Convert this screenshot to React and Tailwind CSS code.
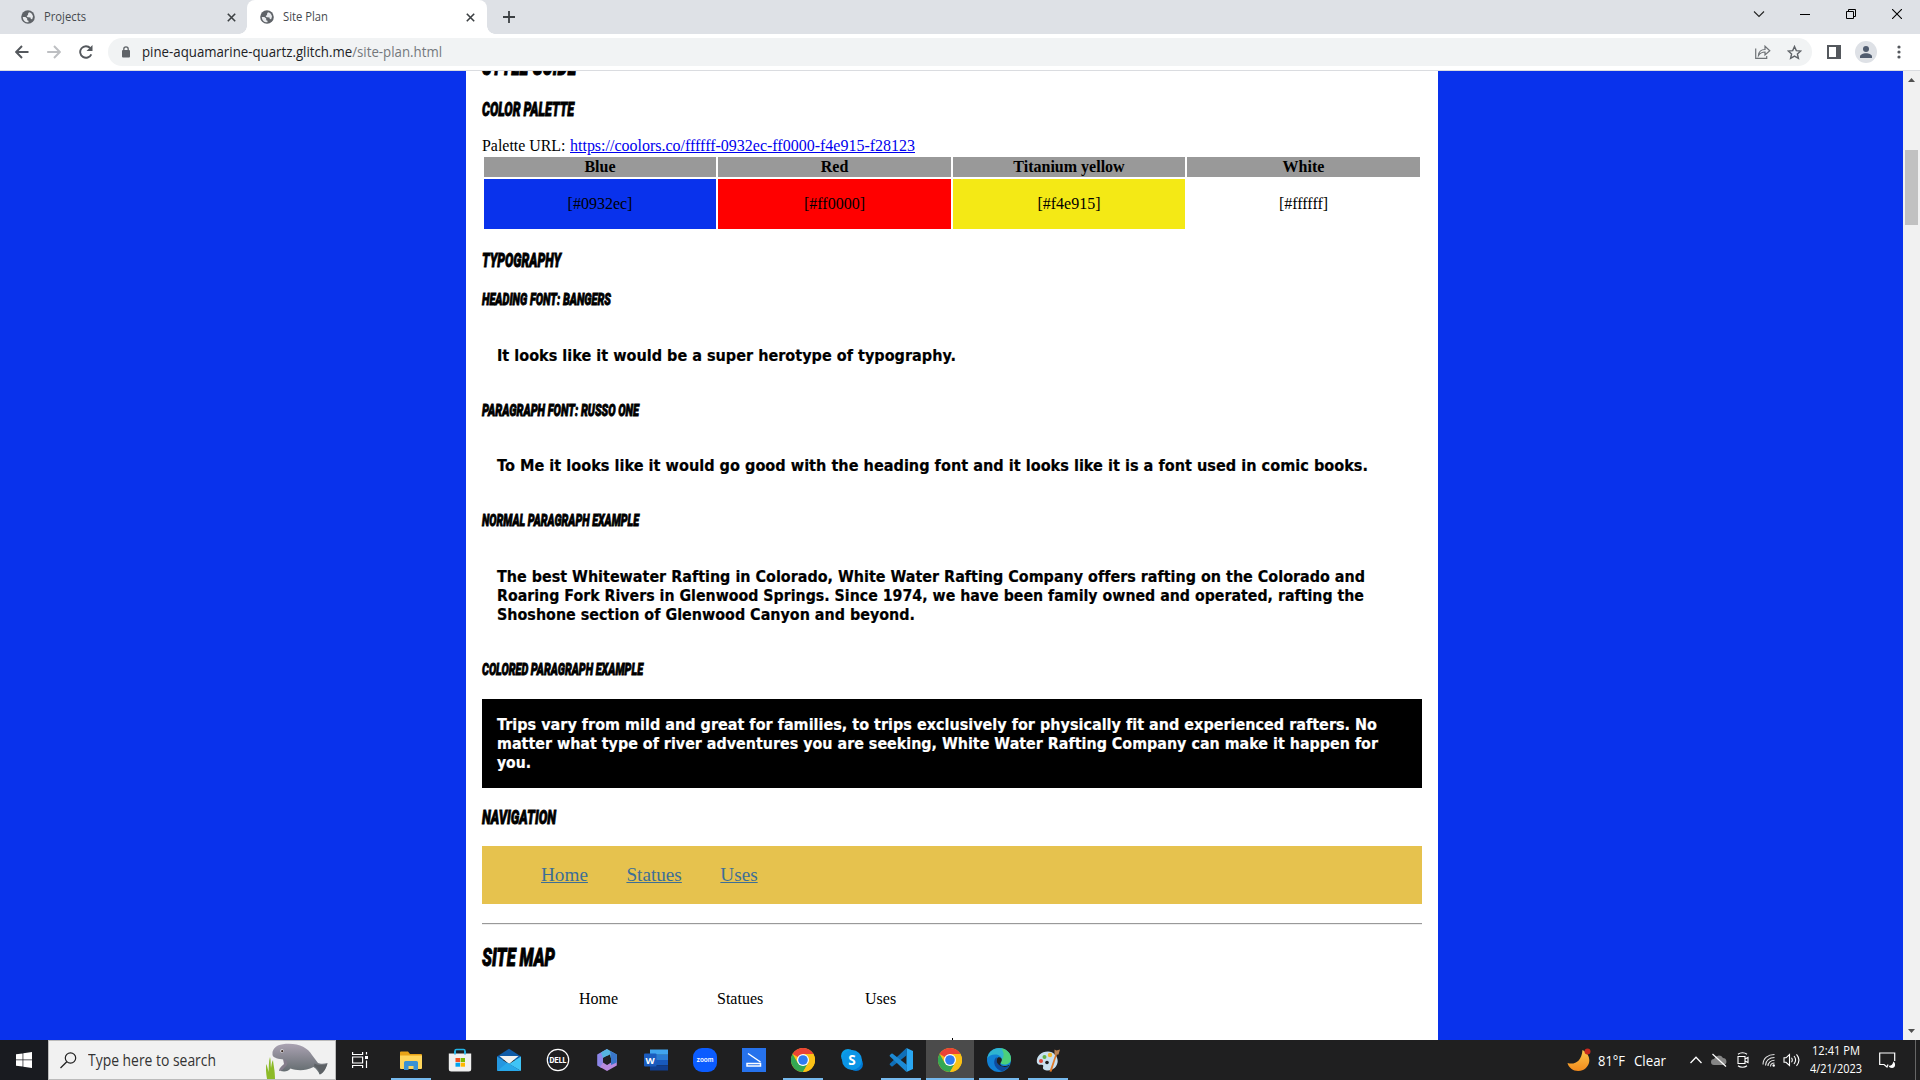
import React, { useLayoutEffect, useRef, useState } from "react";

const SEGOE = "font-['Open_Sans',sans-serif]";
const RUSSO = "font-['DejaVu_Sans',sans-serif] font-bold text-[15px] leading-[19px] [font-variant-ligatures:none] [-webkit-text-stroke:0.2px_currentColor]";
const BANGERS = "font-['Roboto',sans-serif] font-black italic [-webkit-text-stroke:0.9px_black] uppercase";

// Scales a run of text horizontally so that it fills exactly w pixels.
function Fit({ w, className = "", children }) {
  const ref = useRef(null);
  const [scale, setScale] = useState(1);
  useLayoutEffect(() => {
    ref.current.style.transform = "none";
    const s = w / ref.current.getBoundingClientRect().width;
    ref.current.style.transform = `scaleX(${s})`;
    setScale(s);
  }, [w]);
  return (
    <span className="block shrink-0 whitespace-nowrap" style={{ width: w }}>
      <span ref={ref} className={"inline-block origin-left align-top " + className} style={{ transform: `scaleX(${scale})` }}>
        {children}
      </span>
    </span>
  );
}

const H2 = ({ w, mt, children }) => (
  <h2 className={`${BANGERS} h-7 text-[25px] leading-7 ${mt}`}><Fit w={w}>{children}</Fit></h2>
);
const H3 = ({ w, mt, children }) => (
  <h3 className={`${BANGERS} h-6 text-[20px] leading-6 ${mt}`}><Fit w={w}>{children}</Fit></h3>
);
const H4 = ({ w, mt, children }) => (
  <h4 className={`${BANGERS} h-5 text-[17px] leading-5 ${mt}`}><Fit w={w}>{children}</Fit></h4>
);
const Para = ({ lines, className }) => (
  <div className={`px-[15px] pt-[17px] pb-[15px] ${RUSSO} ${className}`}>
    {lines.map(([t, w]) => (
      <Fit key={t} w={w}>{t}</Fit>
    ))}
  </div>
);

const Globe = () => (
  <svg className="size-[14px] shrink-0" viewBox="0 0 14 14">
    <circle cx="7" cy="7" r="6.8" fill="#5f6368" />
    <path d="M1.800 7h2.600l1.800 1.600v1.600l1.300.6v1.500C4 12.500 1.800 10 1.800 7zM7.300 2c2.600.2 4.500 2.200 4.700 4.600l-.8 2.600-1.400-.3-.3-1.500-2.600-.2c-1.700-.2-1.300-1.700 0-1.900l.2-1.200c0-.9.3-1.200 1.300-1.300z" fill="#e8eaed" />
  </svg>
);
const Close = () => (
  <svg className="size-[9px] shrink-0" viewBox="0 0 9 9"><path d="M.8.8l7.400 7.400M8.200.8.8 8.200" stroke="#3c4043" strokeWidth="1.600" /></svg>
);

function TabStrip() {
  return (
    <div className={`flex h-[34px] bg-[#dee1e6] ${SEGOE} text-[12px] leading-4 text-[#45494d]`}>
      <div className="flex w-[247px] items-center pl-[21px]">
        <Globe />
        <div className="ml-[9px] w-[183px]"><Fit w={42}>Projects</Fit></div>
        <Close />
      </div>
      <div className="flex">
        <div className="relative flex w-[240px] items-center rounded-t-lg bg-white pl-[13px]">
          <span className="absolute -left-2 bottom-0 size-2 bg-[radial-gradient(circle_at_0_0,#dee1e6_7.5px,white_8px)]" />
          <span className="absolute -right-2 bottom-0 size-2 bg-[radial-gradient(circle_at_100%_0,#dee1e6_7.5px,white_8px)]" />
          <Globe />
          <div className="ml-[9px] w-[183px]"><Fit w={45}>Site Plan</Fit></div>
          <Close />
        </div>
      </div>
      <svg className="mt-[11px] ml-[16px] size-3" viewBox="0 0 12 12"><path d="M6 0v12M0 6h12" stroke="#3c4043" strokeWidth="1.800" /></svg>
      <div className="ml-auto flex items-start pt-[9px] pr-[18px]">
        <svg className="mr-[35px] size-[12px]" viewBox="0 0 12 12"><path d="M1 2.500 6 7.500 11 2.500" fill="none" stroke="#222" strokeWidth="1.100" /></svg>
        <svg className="mr-[36px] h-[12px] w-[10px]" viewBox="0 0 10 12"><path d="M0 5.500h10" stroke="#000" /></svg>
        <svg className="mr-[36px] size-[10px]" viewBox="0 0 10 10"><path d="M.5 2.500h7v7h-7zM2.500 2.500v-2h7v7h-2" fill="none" stroke="#000" /></svg>
        <svg className="size-[10px]" viewBox="0 0 10 10"><path d="M0 0l10 10M10 0 0 10" stroke="#000" strokeWidth="1.100" /></svg>
      </div>
    </div>
  );
}

function Toolbar() {
  return (
    <div className={`flex h-9 items-center bg-white ${SEGOE}`}>
      <svg className="ml-[15px] size-[14px] shrink-0" viewBox="0 0 14 14"><path d="M13.500 7H1.500M7 1 1.200 7 7 13" fill="none" stroke="#54585d" strokeWidth="1.900" /></svg>
      <svg className="ml-[18px] size-[14px] shrink-0" viewBox="0 0 14 14"><path d="M.2 7h12M7 1l5.800 6L7 13" fill="none" stroke="#bdbfc2" strokeWidth="1.900" /></svg>
      <svg className="ml-[18px] size-[14px] shrink-0" viewBox="0 0 14 14"><path d="M12.300 9.300A5.800 5.800 0 1 1 11.300 3.100" fill="none" stroke="#54585d" strokeWidth="1.900" /><path d="M13.500 0v6H7.500z" fill="#54585d" /></svg>
      <div className="ml-[15px] flex h-7 w-[1704px] shrink-0 items-center rounded-full bg-[#f1f3f4] pl-[14px]">
        <svg className="h-[12px] w-[8px]" viewBox="0 0 8 12"><rect y="4" width="8" height="7.500" rx="1" fill="#5f6368" /><path d="M1.800 5V3a2.200 2.200 0 0 1 4.400 0v2" fill="none" stroke="#5f6368" strokeWidth="1.300" /></svg>
        <div className="ml-[12px] text-[14px] leading-5 text-[#202124]">
          <Fit w={300}>pine-aquamarine-quartz.glitch.me<span className="text-[#74787c]">/site-plan.html</span></Fit>
        </div>
        <svg className="ml-auto h-[14px] w-4" viewBox="0 0 16 14"><path d="M.7 3.500v9.800h11V11M3.500 10.500C3.800 6.500 6 4.500 10 4.500V1.200l4.800 4.600L10 10V7C7 7 5.300 7.800 3.500 10.500z" fill="none" stroke="#6f7377" strokeWidth="1.200" /></svg>
        <svg className="mr-[10px] ml-[16px] size-[15px]" viewBox="0 0 15 15"><path d="M7.500 1.500l1.800 4.100 4.500.4-3.400 3 1 4.400-3.900-2.300-3.900 2.300 1-4.400-3.400-3 4.500-.4z" fill="none" stroke="#5f6368" strokeWidth="1.400" /></svg>
      </div>
      <svg className="ml-[15px] size-[14px]" viewBox="0 0 14 14"><path fillRule="evenodd" d="M0 0h14v14H0zM2 2v10h7V2z" fill="#54585d" /></svg>
      <svg className="ml-[14px] size-[22px]" viewBox="0 0 22 22"><circle cx="11" cy="11" r="11" fill="#dee1e6" /><circle cx="11" cy="8" r="3" fill="#4f5b6e" /><path d="M5 17v-1.500c0-2 3-3.300 6-3.300s6 1.300 6 3.300V17z" fill="#4f5b6e" /></svg>
      <svg className="ml-5 h-[14px] w-[4px]" viewBox="0 0 4 14"><g fill="#54585d"><circle cx="2" cy="2" r="1.600" /><circle cx="2" cy="7" r="1.600" /><circle cx="2" cy="12" r="1.600" /></g></svg>
    </div>
  );
}

const PALETTE = [
  ["Blue", "[#0932ec]", "bg-[#0932ec]"],
  ["Red", "[#ff0000]", "bg-[#ff0000]"],
  ["Titanium yellow", "[#f4e915]", "bg-[#f4e915]"],
  ["White", "[#ffffff]", "bg-white"],
];

function SitePlan() {
  return (
    <main className="ml-[466px] flex w-[972px] flex-col bg-white px-4 font-['Liberation_Serif',serif] text-base leading-[18px] text-black">
      <H2 w={94} mt="-mt-[18px]">Style Guide</H2>
      <H3 w={92} mt="mt-4">Color Palette</H3>
      <div className="mt-4 flex h-[18px] gap-[4px]">
        <Fit w={83.5}>Palette URL:</Fit>
        <Fit w={345} className="text-[#0000ee] underline">https://coolors.co/ffffff-0932ec-ff0000-f4e915-f28123</Fit>
      </div>
      <div className="grid grid-cols-[232px_233px_232px_233px] gap-[2px] p-[2px] text-center">
        {PALETTE.map(([n]) => <div key={n} className="h-5 bg-[#999] font-bold leading-5">{n}</div>)}
        {PALETTE.map(([n, hex, bg]) => <div key={n} className={`h-[50px] leading-[50px] ${bg}`}>{hex}</div>)}
      </div>
      <H3 w={79} mt="mt-[17px]">Typography</H3>
      <H4 w={129} mt="mt-[17px]">Heading Font: Bangers</H4>
      <Para className="mt-[21px]" lines={[["It looks like it would be a super herotype of typography.", 459]]} />
      <H4 w={157} mt="mt-[19px]">Paragraph Font: Russo One</H4>
      <Para className="mt-5" lines={[["To Me it looks like it would go good with the heading font and it looks like it is a font used in comic books.", 871]]} />
      <H4 w={157} mt="mt-[19px]">Normal Paragraph Example</H4>
      <Para
        className="mt-[21px]"
        lines={[
          ["The best Whitewater Rafting in Colorado, White Water Rafting Company offers rafting on the Colorado and", 868],
          ["Roaring Fork Rivers in Glenwood Springs. Since 1974, we have been family owned and operated, rafting the", 867],
          ["Shoshone section of Glenwood Canyon and beyond.", 418],
        ]}
      />
      <H4 w={161} mt="mt-[19px]">Colored Paragraph Example</H4>
      <Para
        className="mt-5 bg-black text-white"
        lines={[
          ["Trips vary from mild and great for families, to trips exclusively for physically fit and experienced rafters. No", 880],
          ["matter what type of river adventures you are seeking, White Water Rafting Company can make it happen for", 881],
          ["you.", 34],
        ]}
      />
      <H3 w={74} mt="mt-[17px]">Navigation</H3>
      <nav className="mt-[17px] flex h-[58px] items-center gap-[38.5px] bg-[#e6c24e] pl-[59px] text-[19.2px] text-[#3d6e96] underline">
        <span>Home</span><span>Statues</span><span>Uses</span>
      </nav>
      <div className="mt-[19px] h-[2px] border-t border-[#999] bg-[#eee]" />
      <H2 w={73} mt="mt-[19px]">Site Map</H2>
      <div className="mt-[18px] flex h-[18px] pl-[97px]">
        <span className="w-[138px]">Home</span><span className="w-[148px]">Statues</span><span>Uses</span>
      </div>
      <div className="mt-[30px] ml-[470px] h-[2px] w-px bg-black" />
    </main>
  );
}

function ScrollBar() {
  return (
    <div className="ml-auto flex w-[17px] flex-col items-center bg-[#f1f1f1]">
      <svg className="mt-[7px] h-1 w-[7px]" viewBox="0 0 7 4"><path d="M0 4 3.500 0 7 4z" fill="#505050" /></svg>
      <div className="mt-[68px] h-[75px] w-[13px] bg-[#c1c1c1]" />
      <svg className="mt-auto mb-[7px] h-1 w-[7px]" viewBox="0 0 7 4"><path d="M0 0 3.500 4 7 0z" fill="#505050" /></svg>
    </div>
  );
}

const Explorer = () => (
  <svg viewBox="0 0 24 24" className="size-6"><path d="M1 4.500a1 1 0 0 1 1-1h7l2 2.500h11a1 1 0 0 1 1 1V20H1z" fill="#e8a317" /><path d="M1 7.500h22V20a1 1 0 0 1-1 1H2a1 1 0 0 1-1-1z" fill="#ffd65c" /><path d="M5 22v-7.500a1.500 1.500 0 0 1 1.500-1.500h11a1.500 1.500 0 0 1 1.500 1.500V22h-4.500v-4h-5v4z" fill="#3b92d4" /></svg>
);
const Store = () => (
  <svg viewBox="0 0 24 24" className="size-6"><path d="M7 7V3a1.500 1.500 0 0 1 1.500-1.500h7A1.500 1.500 0 0 1 17 3v4" fill="none" stroke="#22b5e8" strokeWidth="1.600" /><path d="M.8 5.500h22.400V21a2.500 2.500 0 0 1-2.500 2.500H3.300A2.500 2.500 0 0 1 .8 21z" fill="#f0f0f0" /><path d="M7 3v3.500M17 3v3.500" stroke="#22b5e8" strokeWidth="1.600" /><path d="M7.500 10H12v4H7.500z" fill="#f25022" /><path d="M12.600 10H17v4h-4.400z" fill="#7fba00" /><path d="M7.500 14.700H12v4H7.500z" fill="#00a4ef" /><path d="M12.600 14.700H17v4h-4.400z" fill="#ffb900" /></svg>
);
const Mail = () => (
  <svg viewBox="0 0 24 24" className="size-6"><path d="M0 8.500 12 .8l12 7.700V12H0z" fill="#0f5ba8" /><path d="M2.500 8h19L12 16z" fill="#f2f2f2" /><path d="M0 8.500 12 16 0 23z" fill="#2497e0" /><path d="M24 8.500 12 16l12 7z" fill="#3fc4f6" /><path d="M0 23 10.500 14.600 24 23z" fill="#28a8ea" /></svg>
);
const Dell = () => (
  <svg viewBox="0 0 24 24" className="size-6"><circle cx="12" cy="12" r="10.700" fill="none" stroke="#fff" strokeWidth="1.200" /><text x="12" y="14.600" textAnchor="middle" textLength="17" lengthAdjust="spacingAndGlyphs" fontFamily="Inter" fontWeight="800" fontSize="7.500" fill="#fff">DELL</text></svg>
);
const M365 = () => (
  <svg viewBox="0 0 24 24" className="size-6"><path d="M12 1 2.200 6.500v11L6.500 20l3-4.500-1.500-1.500V9.500L15 5z" fill="#8c86e8" /><path d="M12 1l-6 3.400L8 10l7-3.500 1 5 5.800 3.500V6.500z" fill="#56b4e0" /><path d="M21.800 11v6.500L12 23l-7-4 3.500-5 4 2.500L16 14V8z" fill="#b98be0" /><path d="M15 3l6.800 3.500v8L16 17V9z" fill="#3975c9" /><path d="M12 8l4 2.300v4.200L12 17l-4-2.500v-4.200z" fill="#202024" /></svg>
);
const Word = () => (
  <svg viewBox="0 0 24 24" className="size-6"><path d="M6 1.500h18v5.300H6z" fill="#41a5ee" /><path d="M6 6.800h18V12H6z" fill="#2b7cd3" /><path d="M6 12h18v5.300H6z" fill="#185abd" /><path d="M6 17.300h18v5.200H6z" fill="#103f91" /><rect y="5.500" width="12.500" height="13" rx="1" fill="#1b5cbe" /><text x="6.200" y="15.500" textAnchor="middle" fontFamily="Open Sans" fontWeight="700" fontSize="9.500" fill="#fff">W</text></svg>
);
const Zoom = () => (
  <svg viewBox="0 0 24 24" className="size-6"><rect width="24" height="24" rx="9" fill="#0b5cff" /><text x="12" y="14" textAnchor="middle" textLength="17" lengthAdjust="spacingAndGlyphs" fontFamily="Inter" fontWeight="600" fontSize="6.500" fill="#fff">zoom</text></svg>
);
const Scan = () => (
  <svg viewBox="0 0 24 24" className="size-6"><path d="M0 0h24v24H0z" fill="#2672ec" /><path d="M6 5.500 18.500 14M5 15.500h13.500v2.500H5z" fill="none" stroke="#fff" strokeWidth="1.500" /></svg>
);
const Chrome = () => (
  <svg viewBox="0 0 24 24" className="size-6"><circle cx="12" cy="12" r="12" fill="#fbc116" /><path d="M1.600 6A12 12 0 0 1 22.400 6H12v6z" fill="#ea4335" /><path d="M1.600 6 6.800 15l5.200 3v6A12 12 0 0 1 1.600 6z" fill="#34a853" /><path d="M17.200 15 12 24l-2-6z" fill="#34a853" /><path d="M22.400 6H12v12l5.200-3L12 24A12 12 0 0 0 22.400 6z" fill="#fbc116" /><circle cx="12" cy="12" r="6" fill="#fff" /><circle cx="12" cy="12" r="4.800" fill="#2f7cf0" /></svg>
);
const Skype = () => (
  <svg viewBox="0 0 24 24" className="size-6"><circle cx="8" cy="8" r="7" fill="#0a9fe8" /><circle cx="16" cy="16" r="7" fill="#0078d4" /><circle cx="12" cy="12" r="10" fill="#0b95e6" /><text x="12" y="16.700" textAnchor="middle" fontFamily="Open Sans" fontWeight="700" fontSize="13.500" fill="#fff">S</text></svg>
);
const VSCode = () => (
  <svg viewBox="0 0 24 24" className="size-6"><path d="M17.500 0 24 3v18l-6.500 3z" fill="#2aa7f2" /><path d="M17.500 0 1 15.500a1 1 0 0 0 0 1.500l1.300 1.200a1 1 0 0 0 1.400 0L18 7z" fill="#0f6fb8" /><path d="M17.500 24 1 8.500A1 1 0 0 1 1 7l1.300-1.200a1 1 0 0 1 1.400 0L18 17z" fill="#1c8ad4" /></svg>
);
const Edge = () => (
  <svg viewBox="0 0 24 24" className="size-6"><circle cx="12" cy="12" r="12" fill="#1180d4" /><path d="M.2 10.500C1.500 3.500 6.500 0 12 0c7 0 12 5 12 10.500 0 4-3 6-6.500 6-2.500 0-4-1-3.700-2 .5-1 1-1.500 1-3C14.800 8.500 11.500 6.500 8 6.500 4.500 6.500 1.500 8 .2 10.500z" fill="#2fb4d0" /><path d="M14 .2C20 1.200 24 5.500 24 10.500c0 4-3 6-6.500 6-2.500 0-4-1-3.700-2 .5-1 1-1.500 1-3 3-3 2-8-.8-11.300z" fill="#55d95e" opacity=".75" /><path d="M9 9.500c-4 4.500-1 12 6 13.800 3-.8 5.500-2.800 7-5.300-5 2.300-11 0-12.200-4-.3-1.500-.3-3 .2-4.200z" fill="#0f4a9c" /><path d="M13.800 14.500c-1.500 2 .5 3.500 3.700 3.500 2 0 3.500-.3 5-1.200l-.5 1.200c-5 2.300-11 0-12.200-4-.3-1.500 0-3.500 1-4.500 2-1 4 .5 4 2 0 1.500-.5 2-1 3z" fill="#1f1f20" /></svg>
);
const Paint = () => (
  <svg viewBox="0 0 24 24" className="size-6"><path d="M12 3.500C5 3.500.8 8.500.8 13c0 3.500 2.700 4 4.700 3.800 2-.1 2 1 1.500 2.500-.5 2 1.500 3.200 5 3.200 5.500 0 9.700-4.500 9.700-9.500S17.500 3.500 12 3.500z" fill="#c8e0f0" /><circle cx="5" cy="13" r="2" fill="#e04a3a" /><circle cx="8.500" cy="9" r="2" fill="#62b347" /><circle cx="14" cy="7" r="2.200" fill="#f3b72d" /><circle cx="11" cy="14.500" r="1.800" fill="#1f1f20" /><path d="M19.500 6 13.500 23.500l2 .2L21 6.500z" fill="#e07a2a" /><path d="M18.500 1.500l2 1 3.500-1-1.500 5-4 .5z" fill="#b98252" /></svg>
);

const APPS = [
  [Explorer, 1], [Store, 0], [Mail, 0], [Dell, 0], [M365, 0], [Word, 0], [Zoom, 0], [Scan, 0],
  [Chrome, 1], [Skype, 0], [VSCode, 1], [Chrome, 2], [Edge, 1], [Paint, 1],
];

const Manatee = () => (
  <svg className="ml-auto h-[36px] w-[62px] self-end" viewBox="0 0 62 36">
    <defs><linearGradient id="hide" x1="0" y1="0" x2="0" y2="1"><stop offset="0" stopColor="#aaa2b2" /><stop offset="1" stopColor="#5d6769" /></linearGradient></defs>
    <path d="M6.500 9C8 3 14 .8 23 .8 34 1 42 5 46 12l6 8c2 1 6 1 9.500 0-1 4-4 9-8 11.500-1-3-3-5.500-6-7.500-9 4.500-17 3.500-23 1.500-2 3-6 3.500-10 2.500 1-3 3-4.500 5-6l-2-5.500C13 16 7 15 6.500 12z" fill="url(#hide)" />
    <path d="M17 16c4 1 6 4 3 7s-4 5-7 5c0-3 3-5 5-7z" fill="#847d8b" />
    <path d="M48 23c4 2 6 5 6 8.500 4-2 6-6 7.500-11-4 2-9 2-13 0z" fill="#5d6165" />
    <circle cx="16" cy="8" r="1.700" fill="#eee" /><circle cx="16.200" cy="8.200" r="1.100" fill="#3a2a24" />
    <path d="M1 36C0 30-.5 24 .5 21c1 4 1.500 5 2 8 .5-6 0-10 1.500-15 1 4 .5 7 1 11 .5-3 .5-5 2-8 .5 6 2 10 2 19z" fill="#8cba28" />
  </svg>
);

function Tray() {
  return (
    <div className="ml-auto flex items-center text-white">
      <svg className="h-[24px] w-6" viewBox="0 0 24 24"><defs><linearGradient id="moon" x1="0" y1="0" x2="0" y2="1"><stop offset="0" stopColor="#ffc64a" /><stop offset="1" stopColor="#f28a1c" /></linearGradient></defs><path d="M15.500 2C25 7 24 18 16 22 9 25 2 21 .5 15c7 2 14-1 15-13z" fill="url(#moon)" /><circle cx="20.500" cy="3.500" r="3" fill="#c8291e" /></svg>
      <div className="ml-[7px] text-[15px] leading-5"><Fit w={27}>81°F</Fit></div>
      <div className="ml-[9px] text-[15px] leading-5"><Fit w={32}>Clear</Fit></div>
      <svg className="ml-[24px] h-2 w-3" viewBox="0 0 12 8"><path d="M.5 7 6 1.300 11.500 7" fill="none" stroke="#fff" strokeWidth="1.300" /></svg>
      <svg className="ml-[9px] h-[14px] w-4" viewBox="0 0 16 14"><path d="M3 12a3 3 0 0 1 0-6 5 5 0 0 1 9-1 3.600 3.600 0 0 1 1 7z" fill="#858585" /><path d="M1.500 1 15 13.500" stroke="#fff" strokeWidth="1.200" /></svg>
      <svg className="ml-[10px] h-4 w-3" viewBox="0 0 12 16"><path d="M1 4.500h7v7H1zM8 7l3-1.500v5L8 9M1 2.300c2.500-2 6.500-2 9 0M1 13.700c2.500 2 6.500 2 9 0" fill="none" stroke="#fff" strokeWidth="1.100" /></svg>
      <svg className="ml-[13px] size-[14px]" viewBox="0 0 14 14"><g fill="none" stroke="#e5e5e5" strokeWidth="1.100"><path d="M1 11.500C1 5 6 1.500 12.500 1.500" /><path d="M3.500 12.500C3.500 7.500 7.500 4.500 12.500 4.500" /><path d="M6 13c0-3.500 3-5.700 6.500-5.700" /><path d="M8.500 13.500c0-2.300 1.800-3.500 4-3.500" /></g><circle cx="11.700" cy="12.500" r="1.200" fill="#fff" /></svg>
      <svg className="ml-[7px] h-[14px] w-[17px]" viewBox="0 0 17 14"><path d="M1 4.800h2L6.500 1.500v11L3 9.300H1zM8.500 4.800c1 1.400 1 3 0 4.400M11 3c2 2.500 2 5.500 0 8M13.500 1.300c3 3.500 3 8 0 11.500" fill="none" stroke="#fff" strokeWidth="1.100" /></svg>
      <div className="ml-[9px] flex w-[53px] flex-col items-center text-[12px] leading-[18px]">
        <Fit w={48}>12:41 PM</Fit>
        <Fit w={52}>4/21/2023</Fit>
      </div>
      <svg className="ml-[17px] h-[17px] w-[17px]" viewBox="0 0 17 17"><path d="M9 12.500 8 15l-3-2.500H.7V1h15v8" fill="none" stroke="#fff" strokeWidth="1.200" /><path d="M14.500 9.500c2.500 2 2 6.500-1.500 6.500-1.500 0-3-.8-3.300-2.200 2.500.2 4-1.300 4.800-4.300z" fill="#fff" /></svg>
      <div className="mr-1 ml-[19px] h-10 w-px bg-[#666]" />
    </div>
  );
}

function TaskBar() {
  return (
    <div className={`flex h-10 bg-[#1f1f20] ${SEGOE}`}>
      <div className="flex w-12 items-center justify-center bg-[#191b20]">
        <svg className="size-4" viewBox="0 0 16 16"><path d="M0 2.300 6.600 1.400v6.200H0zM7.300 1.300 16 0v7.600H7.300zM0 8.300h6.600v6.300L0 13.700zM7.300 8.300H16V16l-8.700-1.200z" fill="#fff" /></svg>
      </div>
      <div className="flex w-72 items-center border border-[#bbb] bg-[#f1f1f1] pr-[7px] pl-[11px] text-[#333]">
        <svg className="size-[17px]" viewBox="0 0 17 17"><circle cx="10.500" cy="6" r="5.200" fill="none" stroke="#222" strokeWidth="1.200" /><path d="M6.800 9.800.5 16" stroke="#222" strokeWidth="1.300" /></svg>
        <div className="ml-[11px] text-[15.500px] leading-5"><Fit w={128}>Type here to search</Fit></div>
        <Manatee />
      </div>
      <svg className="mt-3 ml-4 h-4 w-4" viewBox="0 0 16 16"><path d="M.6 0v2.500h10V0M.6 16v-2.500h10V16M.6 5h10v6H.6zM14.500 0v2.500M14.500 8.500V16" fill="none" stroke="#fff" strokeWidth="1.200" /><path d="M13 4h3v3h-3z" fill="#fff" /></svg>
      <div className="ml-[19px] flex gap-px">
        {APPS.map(([Icon, state], i) => (
          <div key={i} className={`flex h-10 w-12 flex-col items-center pt-2 ${state === 2 ? "bg-[#4b4b4b]" : ""}`}>
            <Icon />
            {state > 0 && <div className={`mt-auto h-[2px] bg-[#76b9ed] ${state === 2 ? "w-12" : "w-10"}`} />}
          </div>
        ))}
      </div>
      <Tray />
    </div>
  );
}

export default function App() {
  return (
    <div className="flex h-[1080px] w-[1920px] flex-col overflow-hidden">
      <TabStrip />
      <Toolbar />
      <div className="h-px shrink-0 bg-[#dadce0]" />
      <div className="flex h-[969px] shrink-0 overflow-hidden bg-[#0932ec]">
        <SitePlan />
        <ScrollBar />
      </div>
      <TaskBar />
    </div>
  );
}
